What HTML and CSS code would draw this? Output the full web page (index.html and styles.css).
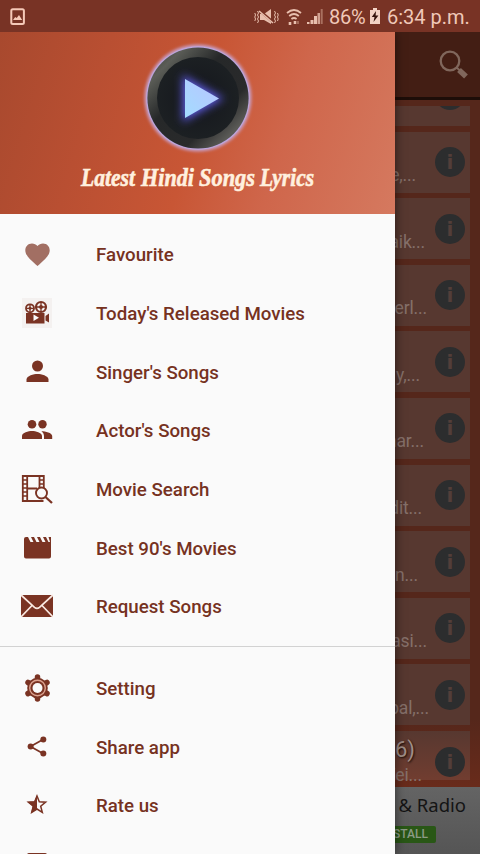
FILE: index.html
```
<!DOCTYPE html>
<html lang="en">
<head>
<meta charset="utf-8">
<title>Latest Hindi Songs Lyrics</title>
<link rel="stylesheet" href="styles.css">
</head>
<body>
<div class="phone">
  <header class="status">
    <svg class="status-photo" width="16" height="18" viewBox="0 0 16 18"><rect x="1.3" y="1.3" width="12.6" height="14.6" rx="1.5" fill="none" stroke="#f5c9b8" stroke-width="2"/><path d="M3 12l2.2-3 1.5 1 2.3-3 3.2 5z" fill="#f5c9b8"/></svg>
    <div class="status-right">
      <svg class="vibrate" width="26" height="18" viewBox="0 0 26 18" fill="#e8bfae"><path d="M6 6h4l7-5v15l-7-4H6z"/><path d="M5 2l15 13" stroke="#783325" stroke-width="2.8"/><path d="M5 3l14 12" stroke="#e8bfae" stroke-width="1.6"/><path d="M3.5 3l1 2-1 2 1 2-1 2 1 2-1 2M.8 5l.7 2-.7 2 .7 2-.7 2M20.5 3l1 2-1 2 1 2-1 2 1 2-1 2M23.5 5l.7 2-.7 2 .7 2-.7 2" fill="none" stroke="#e8bfae" stroke-width="1"/></svg>
      <svg class="wifi" width="16" height="18" viewBox="0 0 16 18" fill="none" stroke="#e8bfae" stroke-width="1.8"><path d="M1 5q7-6 14 0M3.2 8q4.8-4 9.6 0M5.4 11q2.6-2 5.2 0"/><path d="M4 17v-3M9 13v3" stroke-width="2.6"/><path d="M12 13v3" stroke="#a9705f"/></svg>
      <svg class="signal" width="17" height="17" viewBox="0 0 17 17"><path d="M0 14h2.500v2H0zM3.500 12h3v4h-3zM7 8h3v8H7z" fill="#e8bfae"/><path d="M10.500 5h2.500v11h-2.500z" fill="#d0a090"/><path d="M13.700 1h2v15h-2z" fill="#a9705f"/></svg>
      <span class="percent">86%</span>
      <svg class="battery" width="12" height="17" viewBox="0 0 12 17"><path d="M1 2h3V0h4v2h3v14H1z" fill="#f3d3c5"/><path d="M7 3L2.8 9h2.7L4.5 14 9.4 7.5H6.6z" fill="#35150e"/></svg>
      <span class="clock">6:34 p.m.</span>
    </div>
  </header>

  <main class="app">
    <div class="toolbar">
      <svg width="32" height="32" viewBox="0 0 32 32" fill="none" stroke="#80675c"><circle cx="12" cy="12" r="9.3" stroke-width="2.3"/><path d="M18.5 18.5l3.5 3" stroke-width="2"/><path d="M21 21l7 6.5" stroke-width="5.5"/></svg>
    </div>
    <div class="songs">
      <div class="card first"><span class="info"></span></div>
      <div class="card"><p class="w1">e,...</p><span class="info">i</span></div>
      <div class="card"><p class="w2">aik...</p><span class="info">i</span></div>
      <div class="card"><p class="w3">erl...</p><span class="info">i</span></div>
      <div class="card"><p class="w4">y,...</p><span class="info">i</span></div>
      <div class="card"><p class="w5">nar...</p><span class="info">i</span></div>
      <div class="card"><p class="w6">dit...</p><span class="info">i</span></div>
      <div class="card"><p class="w7">an...</p><span class="info">i</span></div>
      <div class="card"><p class="w3">asi...</p><span class="info">i</span></div>
      <div class="card"><p class="w8">pal,...</p><span class="info">i</span></div>
      <div class="card last"><div class="lines"><h3>6)</h3><p>Fei...</p></div><span class="info">i</span></div>
    </div>
    <div class="ad">
      <div class="ad-title">&amp; Radio</div>
      <div class="ad-button">INSTALL</div>
    </div>
  </main>

  <nav class="drawer">
    <div class="hero">
      <svg class="hero-art" width="395" height="182" viewBox="0 0 395 182">
        <defs>
          <linearGradient id="ring" x1="0" y1="0" x2="1" y2="1"><stop offset="0" stop-color="#30322f"/><stop offset=".18" stop-color="#5b5d57"/><stop offset=".4" stop-color="#262829"/><stop offset=".68" stop-color="#292a2b"/><stop offset=".84" stop-color="#5a5a56"/><stop offset="1" stop-color="#303236"/></linearGradient>
          <radialGradient id="face"><stop offset="0" stop-color="#14161c"/><stop offset="1" stop-color="#1c2023"/></radialGradient>
          <linearGradient id="tri" x1="1" y1="0" x2="0" y2="1"><stop offset="0" stop-color="#b9c4ff"/><stop offset="1" stop-color="#a4dcff"/></linearGradient>
          <filter id="glow" x="-60%" y="-60%" width="220%" height="220%"><feGaussianBlur stdDeviation="4.5"/></filter>
          <filter id="halo" x="-20%" y="-20%" width="140%" height="140%"><feGaussianBlur stdDeviation="1.5"/></filter>
        </defs>
        <circle cx="198" cy="66" r="53.500" fill="#c79cc0" filter="url(#halo)"/>
        <circle cx="198" cy="66" r="51.8" fill="#bca5dc"/>
        <circle cx="198" cy="66" r="50.6" fill="url(#ring)"/>
        <circle cx="198" cy="66" r="41" fill="url(#face)"/>
        <path d="M185 47v39l34-19.5z" fill="#6867ed" stroke="#5855d8" stroke-width="5" filter="url(#glow)"/>
        <path d="M185 47v39l34-19.5z" fill="url(#tri)"/>
        <g class="brand">
          <text x="81" y="154" textLength="54" lengthAdjust="spacingAndGlyphs">Latest</text>
          <text x="141" y="154" textLength="53" lengthAdjust="spacingAndGlyphs">Hindi</text>
          <text x="199" y="154" textLength="56" lengthAdjust="spacingAndGlyphs">Songs</text>
          <text x="260" y="154" textLength="54" lengthAdjust="spacingAndGlyphs">Lyrics</text>
        </g>
      </svg>
    </div>
    <ul class="menu">
      <li><svg viewBox="0 0 32 32"><path d="M16.500 28l-1.8-1.6C8.500 20.800 4.300 17 4.300 12.200c0-3.900 2.900-6.800 6.700-6.800 2.100 0 4.200 1 5.500 2.600 1.300-1.600 3.400-2.600 5.500-2.600 3.800 0 6.700 2.900 6.700 6.800 0 4.800-4.200 8.600-10.400 14.200z" fill="#a26f63"/></svg><span>Favourite</span></li>
      <li><svg viewBox="0 0 32 32"><path d="M1 1h30v30H1z" fill="#f4f1f0"/><path d="M5 16h18.500v10.500H5zM24.500 19l3.500-2.500v9L24.500 23.500z"/><path d="M12.500 17.500v6.500l5.500-3.200z" fill="#fafafa"/><g fill="none" stroke="#7a3323"><circle cx="9" cy="11.300" r="4" stroke-width="1.800"/><circle cx="20" cy="10" r="5" stroke-width="2.200"/><path d="M9 8v7M5.500 11.300h7M20 5v10M15 10h10" stroke-width="1.300"/></g><circle cx="9" cy="11.300" r="1.500"/><circle cx="20" cy="10" r="2"/></svg><span>Today's Released Movies</span></li>
      <li><svg viewBox="0 0 32 32"><circle cx="16.500" cy="10" r="5.500"/><path d="M5.500 26v-2.500c0-3.700 7.300-5.500 11-5.500s11 1.800 11 5.500V26z"/></svg><span>Singer's Songs</span></li>
      <li><svg viewBox="0 0 32 32"><circle cx="11" cy="10.300" r="4.300"/><circle cx="21.500" cy="10.300" r="4.200"/><path d="M1 25v-3c0-3.300 6.500-5 10-5s10 1.700 10 5v3zM23 25v-3c0-2-1-3.600-2.600-4.800 4 0 10.800 1.500 10.800 4.800v3z"/></svg><span>Actor's Songs</span></li>
      <li><svg viewBox="0 0 32 32" fill="none" stroke="#7a3323"><path d="M22.500 28H1.800V3h21v12M6.200 3v25M18.500 3v12M6.200 15.500h10" stroke-width="1.800"/><path d="M2 7h4M2 11h4M2 15h4M2 19h4M2 23h4M18.500 7h4M18.500 11h4" stroke-width="1.600"/><circle cx="20.500" cy="20" r="5.500" stroke-width="1.900"/><path d="M24.500 24l6.500 6" stroke-width="2.300"/></svg><span>Movie Search</span></li>
      <li><svg viewBox="0 0 32 32"><path d="M27.500 5H30v19.500a2 2 0 0 1-2 2H5a2 2 0 0 1-2-2V7a2 2 0 0 1 2-2h2l2.500 5h3L10 5h3l2.500 5h3L16 5h3l2.500 5h3L22 5h3l2.500 5H29z"/></svg><span>Best 90's Movies</span></li>
      <li><svg viewBox="0 0 32 32"><path d="M0 5h32v22H0z"/><path d="M0 5l13.500 12.300q2.500 2 5 0L32 5M0 27l11-11.500M32 27L21 15.500" fill="none" stroke="#fae9e2" stroke-width="1.700"/></svg><span>Request Songs</span></li>
    </ul>
    <ul class="menu second">
      <li><svg viewBox="0 0 32 32"><path d="M16.500 5v22M7 10.500l19 11M26 10.500l-19 11" fill="none" stroke="#7a3323" stroke-width="5.500" stroke-linecap="round"/><circle cx="16.500" cy="16" r="10.300"/><circle cx="16.500" cy="16" r="7.800" fill="none" stroke="#dca18e" stroke-width="1.400"/><circle cx="16.500" cy="16" r="5" fill="#fafafa"/></svg><span>Setting</span></li>
      <li><svg viewBox="0 0 32 32"><path d="M22 8.500L9.500 15.500l12.500 7" fill="none" stroke="#7a3323" stroke-width="1.700"/><circle cx="22.300" cy="8.500" r="3"/><circle cx="9.600" cy="15.500" r="3"/><circle cx="22.300" cy="22.500" r="3"/></svg><span>Share app</span></li>
      <li><svg viewBox="0 0 32 32"><path d="M16 7l2.300 5.800 6.300.4-4.900 4 1.600 6.100L16 20l-5.300 3.300 1.600-6.100-4.900-4 6.300-.4z" fill="none" stroke="#7a3323" stroke-width="1.500"/><path d="M16 6v14.300l-6 4 1.800-7L6.500 13l6.800-.6z"/></svg><span>Rate us</span></li>
      <li><svg viewBox="0 0 32 32"><path d="M6 7q0-2 2-2h16q2 0 2 2v18H6z"/></svg></li>
    </ul>
  </nav>
</div>
</body>
</html>
```
FILE: styles.css
```
* { box-sizing: border-box; }
body { margin: 0; font-family: Roboto, "Noto Sans", sans-serif; }
.phone { position: relative; width: 480px; height: 854px; overflow: hidden; display: flex; flex-direction: column; background: #55271b; }
svg { display: block; flex: none; }

.status { height: 32px; flex: none; display: flex; align-items: center; justify-content: space-between; padding: 1px 11px 0 10px; background: #783325; color: #f0c8b8; font-size: 20px; }
.status-right { display: flex; align-items: center; }
.wifi { margin-left: 6px; }
.signal { margin-left: 5px; }
.percent { margin-left: 5px; width: 37px; letter-spacing: -.2px; }
.battery { margin-left: 3px; }
.clock { margin-left: 6px; width: 82px; white-space: nowrap; }

.app { flex: 1; min-height: 0; display: flex; flex-direction: column; }
.toolbar { height: 68px; flex: none; display: flex; justify-content: flex-end; padding: 17px 10px 0 0; background: #431e14; border-bottom: 3px solid #1d0d08; }
.songs { flex: 1; min-height: 0; overflow: hidden; padding: 6px 10px 0 0; display: flex; flex-direction: column; gap: 5.600px; background: linear-gradient(#55271b 90%, #692b1b); }
.card { height: 61px; flex: none; display: flex; justify-content: flex-end; align-items: center; padding-right: 5px; background: #573830; color: #85706a; }
.card.first { height: 20px; align-items: flex-end; overflow: hidden; padding-bottom: 16px; }
.card.last { height: 49px; align-items: flex-start; padding-top: 16px; background: linear-gradient(#573830, #713d30); }
.card p { margin: 0; width: 100px; padding-top: 26px; font-size: 17.500px; letter-spacing: -.15px; line-height: 20px; text-align: right; white-space: nowrap; }
.info { width: 30px; height: 30px; flex: none; border-radius: 50%; background: #2c2d2e; color: #533e39; font: bold 20px/30px "DejaVu Sans", sans-serif; text-align: center; }
.card .w1 { margin-right: 19px; }
.card .w2 { margin-right: 10px; }
.card .w3 { margin-right: 8px; }
.card .w4 { margin-right: 15px; }
.card .w5 { margin-right: 11px; }
.card .w6 { margin-right: 13px; }
.card .w7 { margin-right: 17px; }
.card .w8 { margin-right: 6px; }
.lines { width: 80px; margin: -12px 13px 0 0; text-align: right; }
.lines h3 { margin: 0 7px 0 0; font-size: 22px; line-height: 30px; font-weight: 400; color: #a08e88; text-shadow: 1px 1px 2px #1a0c08; }
.card .lines p { width: auto; padding: 0; }
.ad { height: 67px; flex: none; padding: 5px 14px 0 0; display: flex; flex-direction: column; align-items: flex-end; gap: 8px; background: linear-gradient(#646464, #555); }
.ad-title { font: 18.500px/26px "Noto Sans", sans-serif; color: #141414; }
.ad-button { height: 17px; width: 66px; margin-right: 30px; padding-right: 8px; border-radius: 2px; background: #295716; color: #8d9b86; font-size: 12px; line-height: 17px; font-weight: 500; text-align: right; }

.drawer { position: absolute; left: 0; top: 32px; width: 394.700px; height: 822px; overflow: hidden; background: #fafafa; box-shadow: 0 0 10px rgba(0,0,0,.55); clip-path: inset(0 -14px 0 0); }
.hero { height: 181.500px; background: linear-gradient(107deg, #a8492e 0%, #b94f32 25%, #c85635 50%, #cf664b 70%, #d5795f 100%); }
.brand { font: italic bold 26px "Liberation Serif", serif; fill: #fff0df; stroke: #fff0df; stroke-width: .6px; }
.menu { list-style: none; margin: 0; padding: 11.500px 0 10px; }
.menu li { height: 58.670px; display: flex; align-items: center; padding-left: 21px; color: #76321f; font-size: 18.700px; font-weight: 500; white-space: nowrap; }
.menu svg { width: 32px; height: 32px; fill: #7a3323; }
.menu svg[fill="none"] { fill: none; }
.menu span { margin-left: 43px; padding-top: 2px; }
.second { padding-top: 12px; border-top: 1px solid #d2d2d2; }
```
